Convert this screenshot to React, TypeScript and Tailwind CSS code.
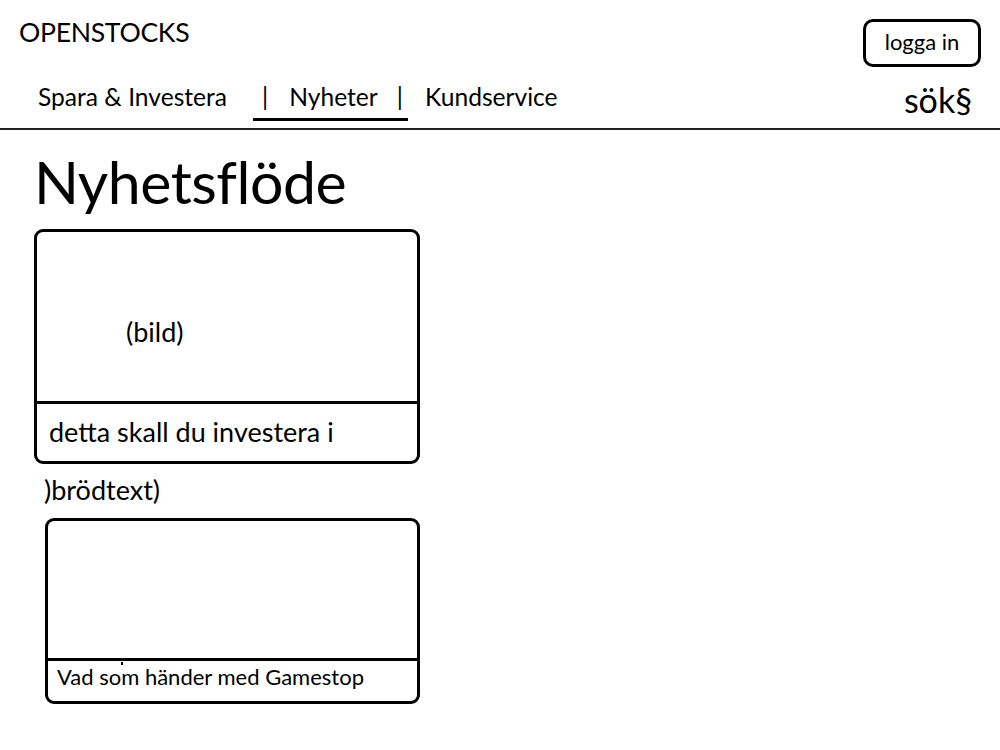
import React from 'react';

const font = { fontFamily: 'Lato, "Open Sans", sans-serif' };

const NewsCard = ({ caption, image, className, captionClass, mark }: { caption: string; image?: string; className: string; captionClass: string; mark?: boolean }) => (
  <div className={`flex flex-col border-[3px] border-black rounded-[9px] ${className}`}>
    <div className="flex-1 flex items-center pl-[89px] pt-[30px] text-[27px] leading-none text-black">{image}</div>
    <div className={`relative border-t-[3px] border-black ${captionClass}`}>
      {mark && <span className="absolute left-[73px] top-[1px] w-[2px] h-[3px] bg-black" />}
      {caption}
    </div>
  </div>
);

export default function App() {
  return (
    <div className="w-[1000px] h-[750px] bg-white text-black" style={font}>
      <header className="h-[130px] border-b-2 border-[#222] flex flex-col">
        <div className="flex justify-between pl-[19px] pr-[19px] pt-[19px]">
          <div className="text-[26.6px] leading-none tracking-[-0.3px]">OPENSTOCKS</div>
          <button className="w-[118px] h-[48px] border-[3px] border-black rounded-[10px] text-[22px] leading-none pb-[3px]">
            logga in
          </button>
        </div>
        <div className="flex items-end justify-between pl-[38px] pr-[28px] mt-[16px]">
          <nav className="flex items-end text-[24.6px] leading-none">
            <span className="pb-[11px]">Spara &amp; Investera</span>
            <span className="ml-[26px] w-[155px] flex justify-between pl-[9px] pr-[5px] pb-[8px] border-b-[3px] border-black">
              <span>|</span>
              <span className="ml-[2px]">Nyheter</span>
              <span>|</span>
            </span>
            <span className="ml-[17px] pb-[11px]">Kundservice</span>
          </nav>
          <div className="text-[34px] leading-none pb-[4px]">sök§</div>
        </div>
      </header>

      <main className="pl-[34px] pt-[22px] flex flex-col">
        <h1 className="text-[59px] leading-none tracking-[-0.5px]">Nyhetsflöde</h1>
        <NewsCard
          className="mt-[18px] w-[386px] h-[235px]"
          image="(bild)"
          caption="detta skall du investera i"
          captionClass="h-[60px] pl-[12px] pt-[14px] text-[27px] leading-none"
        />
        <p className="ml-[10px] mt-[12px] text-[27px] leading-none">)brödtext)</p>
        <NewsCard
          className="ml-[11px] mt-[15px] w-[375px] h-[186px]"
          caption="Vad som händer med Gamestop"
          captionClass="h-[43px] pl-[9px] pt-[5px] text-[22px] leading-none"
          mark
        />
      </main>
    </div>
  );
}
